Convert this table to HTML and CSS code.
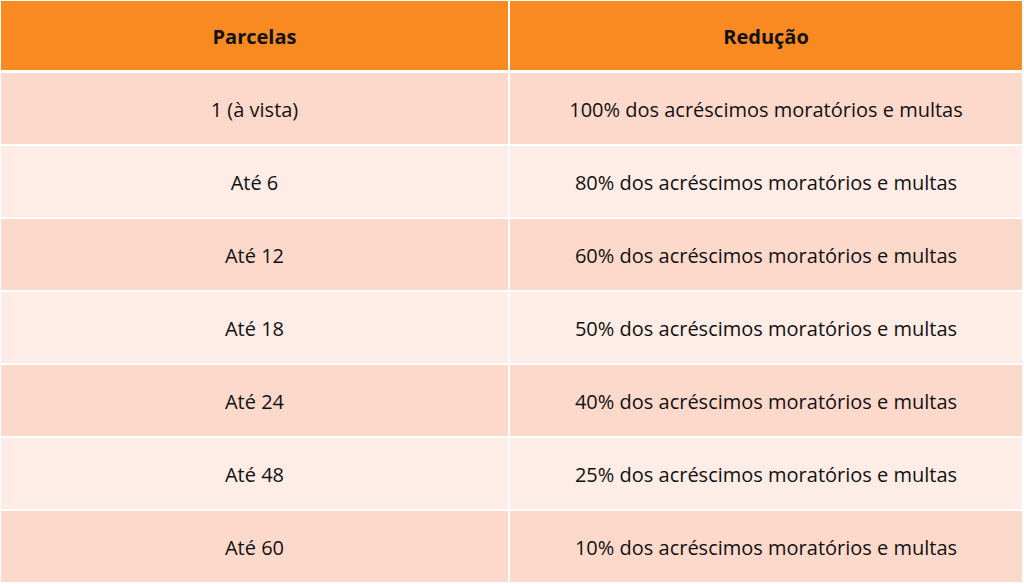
FILE: index.html
```html
<!DOCTYPE html>
<html lang="pt">
<head>
<meta charset="utf-8">
<link rel="stylesheet" href="styles.css">
</head>
<body>
<table class="tbl">
  <thead>
    <tr><th>Parcelas</th><th>Redução</th></tr>
  </thead>
  <tbody>
    <tr class="odd"><td>1 (à vista)</td><td>100% dos acréscimos moratórios e multas</td></tr>
    <tr class="even"><td>Até 6</td><td>80% dos acréscimos moratórios e multas</td></tr>
    <tr class="odd"><td>Até 12</td><td>60% dos acréscimos moratórios e multas</td></tr>
    <tr class="even"><td>Até 18</td><td>50% dos acréscimos moratórios e multas</td></tr>
    <tr class="odd"><td>Até 24</td><td>40% dos acréscimos moratórios e multas</td></tr>
    <tr class="even"><td>Até 48</td><td>25% dos acréscimos moratórios e multas</td></tr>
    <tr class="odd"><td>Até 60</td><td>10% dos acréscimos moratórios e multas</td></tr>
  </tbody>
</table>
</body>
</html>
```
FILE: styles.css
```css
html, body {
  margin: 0;
  padding: 0;
  background: #ffffff;
}
body {
  padding: 1px 2px 0 1px;
  font-family: "Open Sans", "Noto Sans", sans-serif;
  color: #111111;
}
.tbl {
  width: 1021px;
  border-collapse: collapse;
  table-layout: fixed;
}
.tbl th, .tbl td {
  text-align: center;
  vertical-align: middle;
  border-left: 2px solid #ffffff;
  padding: 0;
}
.tbl th:first-child, .tbl td:first-child {
  border-left: none;
  width: 507px;
}
.tbl th {
  background: #f88a21;
  height: 67px;
  font-size: 20px;
  font-weight: 700;
  border-bottom: 3px solid #ffffff;
  padding-top: 2px;
}
.tbl td {
  height: 69px;
  font-size: 20px;
  font-weight: 400;
  border-bottom: 2px solid #ffffff;
  padding-top: 2px;
}
.tbl tr:last-child td {
  border-bottom: none;
  height: 69px;
}
.odd td { background: #fdd9cc; }
.even td { background: #feece6; }
```
